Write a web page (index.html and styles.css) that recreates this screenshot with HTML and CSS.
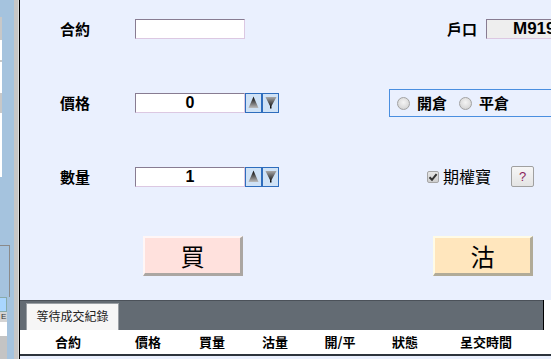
FILE: index.html
```html
<!DOCTYPE html>
<html>
<head>
<meta charset="utf-8">
<link rel="stylesheet" href="styles.css">
</head>
<body>
<div class="app">
  <div class="side">
    <div class="side-blue">
      <div class="sb-gap1"></div>
      <div class="sb-list">
        <div class="sbl grey h23"></div>
        <div class="sbl white h20"></div>
        <div class="sbl grey h2"></div>
        <div class="sbl white h31"></div>
        <div class="sbl grey h20"></div>
        <div class="sbl white h64"></div>
      </div>
      <div class="sb-gap2"></div>
      <div class="sb-box"></div>
      <div class="sb-cell blue"></div>
      <div class="sb-cell greyc">E</div>
      <div class="sb-cell whitec"></div>
      <div class="sb-cell greyb"></div>
    </div>
    <div class="side-grey"></div>
  </div>
  <div class="main">
    <div class="form">
      <div class="row r1">
        <div class="left">
          <span class="lbl">合約</span>
          <div class="field"></div>
        </div>
        <div class="right r1-right">
          <span class="lbl lbl-acct">戶口</span>
          <div class="acct">M9196</div>
        </div>
      </div>
      <div class="row r2">
        <div class="left">
          <span class="lbl">價格</span>
          <div class="field num">0</div>
          <div class="spin up"><svg width="15" height="18" viewBox="0 0 15 18"><defs><linearGradient id="gu1" x1="0" y1="0" x2="0" y2="1"><stop offset="0" stop-color="#000"/><stop offset="1" stop-color="#bcbcbc"/></linearGradient></defs><polygon points="7.5,2.5 12.5,14 2.5,14" fill="url(#gu1)"/></svg></div>
          <div class="spin down"><svg width="15" height="18" viewBox="0 0 15 18"><defs><linearGradient id="gd1" x1="0" y1="0" x2="0" y2="1"><stop offset="0" stop-color="#a8a8a8"/><stop offset="1" stop-color="#000"/></linearGradient></defs><polygon points="2.5,3 13.5,3 8.5,12 8.5,14.5 7,14.5 7,12" fill="url(#gd1)"/></svg></div>
        </div>
        <div class="right">
          <div class="radios">
            <span class="radio"></span><span class="rlbl">開倉</span>
            <span class="radio r-second"></span><span class="rlbl">平倉</span>
          </div>
        </div>
      </div>
      <div class="row r3">
        <div class="left">
          <span class="lbl">數量</span>
          <div class="field num">1</div>
          <div class="spin up"><svg width="15" height="18" viewBox="0 0 15 18"><defs><linearGradient id="gu2" x1="0" y1="0" x2="0" y2="1"><stop offset="0" stop-color="#000"/><stop offset="1" stop-color="#bcbcbc"/></linearGradient></defs><polygon points="7.5,2.5 12.5,14 2.5,14" fill="url(#gu2)"/></svg></div>
          <div class="spin down"><svg width="15" height="18" viewBox="0 0 15 18"><defs><linearGradient id="gd2" x1="0" y1="0" x2="0" y2="1"><stop offset="0" stop-color="#a8a8a8"/><stop offset="1" stop-color="#000"/></linearGradient></defs><polygon points="2.5,3 13.5,3 8.5,12 8.5,14.5 7,14.5 7,12" fill="url(#gd2)"/></svg></div>
        </div>
        <div class="right r3-right">
          <span class="check"><svg width="10" height="10" viewBox="0 0 10 10"><path d="M1.5 5.2 L4 7.8 L8.6 2.2" fill="none" stroke="#333" stroke-width="2"/></svg></span>
          <span class="clbl">期權寶</span>
          <span class="qbtn">?</span>
        </div>
      </div>
      <div class="row r4">
        <div class="left">
          <div class="bigbtn buy">買</div>
        </div>
        <div class="right">
          <div class="bigbtn sell">沽</div>
        </div>
      </div>
    </div>
    <div class="tabs">
      <div class="tab">等待成交紀錄</div>
      <div class="tabs-fill"></div>
      <div class="tabs-end"></div>
    </div>
    <div class="thead">
      <div class="th c1">合約</div>
      <div class="th c2">價格</div>
      <div class="th c3">買量</div>
      <div class="th c4">沽量</div>
      <div class="th c5">開/平</div>
      <div class="th c6">狀態</div>
      <div class="th c7">呈交時間</div>
    </div>
  </div>
</div>
</body>
</html>
```
FILE: styles.css
```css
* { box-sizing: border-box; }
html, body { margin: 0; padding: 0; }
body {
  width: 551px;
  height: 359px;
  overflow: hidden;
  background: #eaf0fe;
  font-family: "Noto Sans CJK TC", "Liberation Sans", sans-serif;
  color: #000;
}
.app {
  display: flex;
  width: 551px;
  height: 359px;
}
.side {
  width: 20px;
  flex: none;
  display: flex;
  border-right: 1px solid #000;
}
.side-blue {
  width: 14px;
  background: #a5c3de;
  display: flex;
  flex-direction: column;
}
.side-grey {
  width: 5px;
  background: #c6c6c6;
  border-right: 1px solid #dcdcdc;
}
.sb-gap1 { height: 17px; flex: none; }
.sb-list { width: 2px; display: flex; flex-direction: column; flex: none; }
.sbl.grey { background: #c8c8c8; }
.sbl.white { background: #fff; }
.h23 { height: 23px; }
.h20 { height: 20px; }
.h2 { height: 2px; }
.h31 { height: 31px; }
.h64 { height: 64px; }
.sb-gap2 { height: 68px; flex: none; }
.sb-box {
  flex: none;
  height: 52px;
  width: 10px;
  border-top: 1px solid #8a8a8a;
  border-right: 1px solid #8a8a8a;
}
.sb-cell { flex: none; width: 7px; font-size: 8px; line-height: 10px; overflow: visible; font-family: "Liberation Sans", sans-serif; }
.sb-cell.blue { height: 15px; background: #a9d6ff; border: 1px solid #8aa; border-left: 0; }
.sb-cell.greyc { height: 10px; background: #d4d4d4; color: #333; padding-left: 1px; }
.sb-cell.whitec { height: 14px; background: #fff; }
.sb-cell.greyb { height: 23px; background: #c4c4c4; }

.main {
  flex: 1;
  display: flex;
  flex-direction: column;
  overflow: hidden;
  min-width: 0;
}
.form {
  height: 300px;
  flex: none;
  padding-top: 19px;
  display: flex;
  flex-direction: column;
}
.row {
  display: flex;
  align-items: center;
  flex: none;
}
.left {
  width: 360px;
  flex: none;
  display: flex;
  align-items: center;
  padding-left: 40px;
}
.left > *, .right > * { flex: none; }
.right {
  flex: none;
  width: 280px;
  display: flex;
  align-items: center;
}
.r1 { height: 20px; }
.r2 { height: 28px; margin-top: 50px; }
.r3 { height: 21px; margin-top: 49px; }
.r4 { height: 40px; margin-top: 49px; align-items: flex-start; }

.lbl {
  width: 75px;
  font-size: 15px;
  font-weight: bold;
  line-height: 20px;
  white-space: nowrap;
}
.field {
  width: 110px;
  height: 20px;
  background: #fff;
  border-top: 1px solid #887c92;
  border-left: 1px solid #887c92;
  border-right: 1px solid #dcc8e2;
  border-bottom: 1px solid #dcc8e2;
}
.field.num {
  text-align: center;
  font-family: "Liberation Sans", Arial, sans-serif;
  font-weight: bold;
  font-size: 16px;
  line-height: 18px;
}
.spin {
  width: 17px;
  height: 20px;
  background: #cfe2f6;
  border: 1px solid #2e6dbd;
  display: flex;
  align-items: center;
  justify-content: center;
}
.spin svg { display: block; }

.r1-right { padding-left: 67px; }
.lbl-acct { width: 39px; }
.acct {
  width: 140px;
  height: 20px;
  background: #eeeeee;
  border-top: 1px solid #887c92;
  border-left: 1px solid #887c92;
  border-bottom: 1px solid #dcc8e2;
  padding-left: 26px;
  font-family: "Liberation Sans", Arial, sans-serif;
  font-weight: bold;
  font-size: 17px;
  line-height: 18px;
  white-space: nowrap;
}

.radios {
  margin-left: 9px;
  width: 200px;
  height: 28px;
  border: 1px solid #4a8fe0;
  border-right: 0;
  display: flex;
  align-items: center;
  padding-left: 7px;
}
.radio {
  width: 13px;
  height: 13px;
  border-radius: 50%;
  border: 1px solid #a2a2a2;
  background: radial-gradient(circle at 50% 40%, #f4f4f4 0%, #dcdcdc 60%, #c8c8c8 100%);
  flex: none;
}
.rlbl {
  font-size: 15px;
  font-weight: bold;
  margin-left: 7px;
  line-height: 20px;
}
.r-second { margin-left: 12px; }

.r3-right { padding-left: 47px; }
.check {
  width: 12px;
  height: 12px;
  border: 1px solid #a6a6a6;
  border-radius: 2px;
  background: linear-gradient(#e6e6e6, #cfcfcf);
  display: flex;
  align-items: center;
  justify-content: center;
}
.check svg { display: block; }
.clbl {
  font-size: 16px;
  margin-left: 4px;
  width: 48px;
  line-height: 21px;
  white-space: nowrap;
}
.qbtn {
  margin-left: 20px;
  width: 23px;
  height: 21px;
  border: 1px solid #a0a0a0;
  border-radius: 2px;
  background: linear-gradient(#f6f6f6, #e4e4e4);
  font-family: "Liberation Sans", Arial, sans-serif;
  font-size: 13px;
  line-height: 19px;
  text-align: center;
  color: #8a1f5a;
}

.bigbtn {
  width: 100px;
  height: 40px;
  font-size: 24px;
  line-height: 35px;
  text-align: center;
  border-top: 2px solid;
  border-left: 2px solid;
  border-right: 3px solid;
  border-bottom: 3px solid;
}
.buy {
  margin-left: 83px;
  background: #ffe1dd;
  border-top-color: #fff6f6;
  border-left-color: #fff6f6;
  border-right-color: #aba6a2;
  border-bottom-color: #aba6a2;
}
.sell {
  margin-left: 53px;
  background: #ffe6bd;
  border-top-color: #fffbe6;
  border-left-color: #fffbe6;
  border-right-color: #b1ab98;
  border-bottom-color: #b1ab98;
}

.tabs {
  height: 30px;
  flex: none;
  background: #636b73;
  border-top: 1px solid #4b5159;
  display: flex;
  align-items: flex-end;
}
.tab {
  margin-left: 6px;
  width: 93px;
  height: 27px;
  background: #f6f6f6;
  border: 1px solid #9a9fa4;
  border-bottom: 0;
  font-size: 12px;
  line-height: 24px;
  text-align: center;
  color: #222;
}
.tabs-fill { flex: 1; }
.tabs-end {
  width: 8px;
  height: 30px;
  margin-top: -1px;
  background: #fff;
  border-left: 1px solid #000;
  align-self: stretch;
}
.thead {
  height: 26px;
  flex: none;
  background: #fff;
  border-bottom: 2px solid #2c343c;
  display: flex;
  align-items: center;
}
.th {
  font-size: 13px;
  font-weight: bold;
  text-align: center;
  line-height: 24px;
  flex: none;
}
.c1 { width: 96px; }
.c2 { width: 64px; }
.c3 { width: 64px; }
.c4 { width: 62px; }
.c5 { width: 68px; }
.c6 { width: 62px; }
.c7 { width: 100px; }
```
